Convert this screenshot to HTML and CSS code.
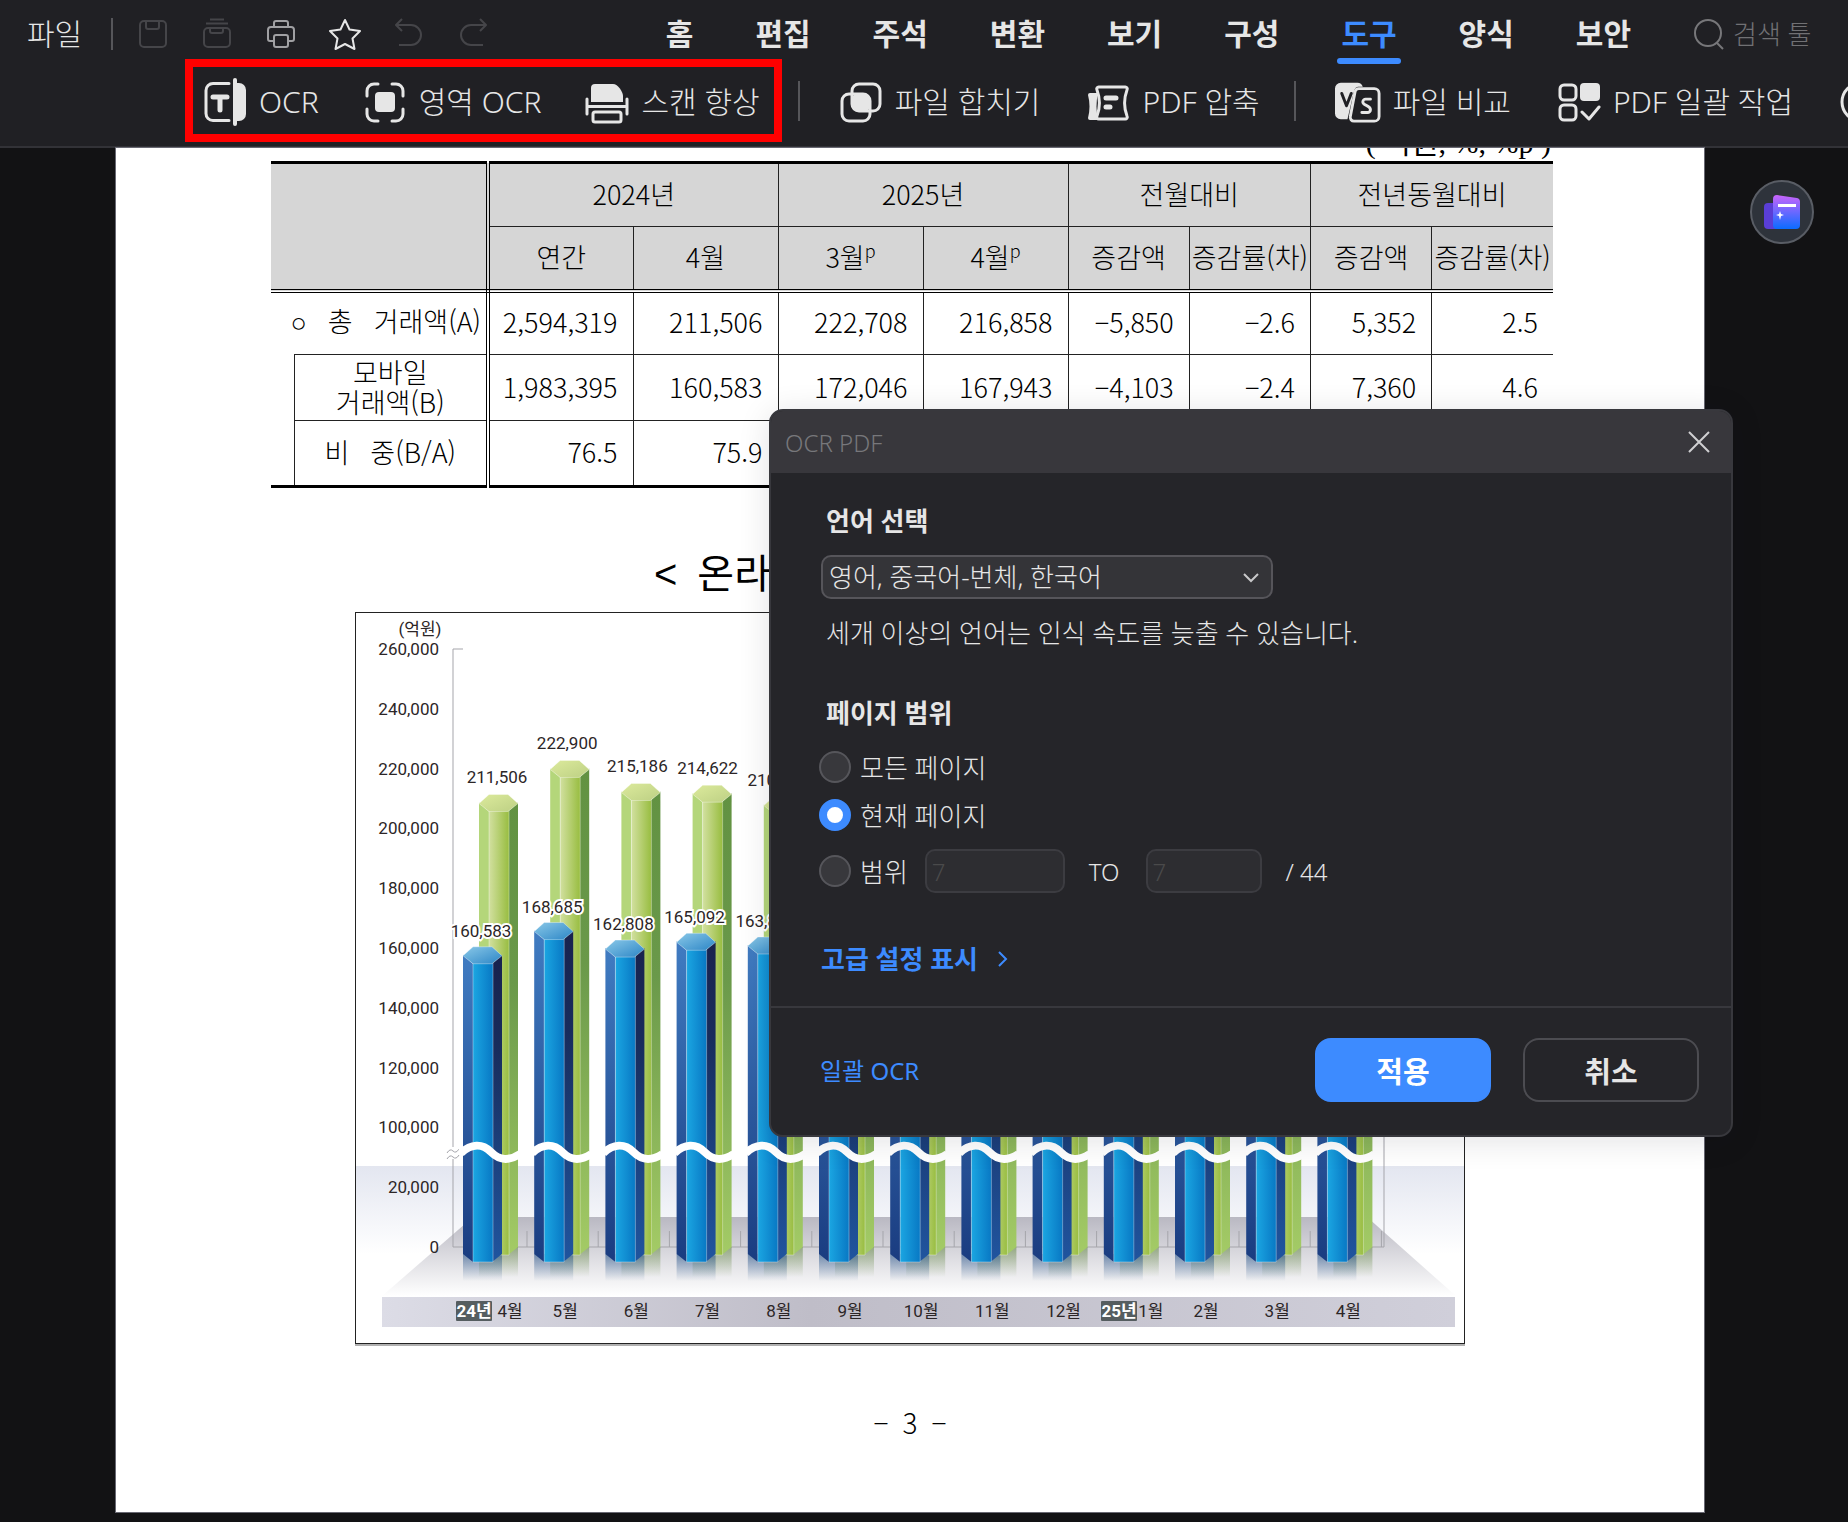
FILE: index.html
```html
<!DOCTYPE html>
<html lang="ko">
<head>
    <meta charset="UTF-8">
    <meta name="viewport" content="width=device-width, initial-scale=1.0">
    <title>OCR PDF</title>
    <link rel="stylesheet" href="styles.css">
</head>
<body>
    <header class="app-header">
        <!-- Menu row -->
        <div class="menu-row">
            <div class="quick-access">
                <button class="file-button">파일</button>
                <span class="divider small"></span>
                <button class="quick-button dim" aria-label="저장">
                    <svg width="32" height="32" viewBox="0 0 32 32"><rect x="3" y="3" width="26" height="26" rx="4"/><path d="M9 3v6a2 2 0 0 0 2 2h9a2 2 0 0 0 2-2V3"/></svg>
                </button>
                <button class="quick-button dim" aria-label="모두 저장">
                    <svg width="32" height="32" viewBox="0 0 32 32"><path d="M9 1.500h14M5 5.500h22"/><rect x="3" y="10" width="26" height="19" rx="4"/><path d="M9 10v3a2 2 0 0 0 2 2h9a2 2 0 0 0 2-2v-3"/></svg>
                </button>
                <button class="quick-button mid" aria-label="인쇄">
                    <svg width="32" height="32" viewBox="0 0 32 32"><path d="M9 9V5a2 2 0 0 1 2-2h10a2 2 0 0 1 2 2v4M8 23H5a2 2 0 0 1-2-2v-9a3 3 0 0 1 3-3h20a3 3 0 0 1 3 3v9a2 2 0 0 1-2 2h-3"/><rect x="9" y="17" width="14" height="12" rx="2"/></svg>
                </button>
                <button class="quick-button" aria-label="즐겨찾기">
                    <svg width="32" height="32" viewBox="0 0 32 32"><path d="M16 2l4.500 9.500 10.500 1.500-7.500 7.500 2 10.500-9.500-5-9.500 5 2-10.500L1 13l10.500-1.500z"/></svg>
                </button>
                <button class="quick-button dim" aria-label="실행 취소">
                    <svg width="32" height="32" viewBox="0 0 32 32"><path d="M9 1L3 7l6 6M3 7h15a10 10 0 0 1 0 20H6"/></svg>
                </button>
                <button class="quick-button dim" aria-label="다시 실행">
                    <svg width="32" height="32" viewBox="0 0 32 32"><path d="M23 1l6 6-6 6M29 7H14a10 10 0 0 0 0 20h12"/></svg>
                </button>
            </div>
            <nav class="tabs">
                <a href="#">홈</a>
                <a href="#">편집</a>
                <a href="#">주석</a>
                <a href="#">변환</a>
                <a href="#">보기</a>
                <a href="#">구성</a>
                <a href="#" class="active">도구</a>
                <a href="#">양식</a>
                <a href="#">보안</a>
                <label class="search">
                    <svg width="32" height="32" viewBox="0 0 32 32"><circle cx="15" cy="15" r="13"/><path d="M24 25l6 6"/></svg>
                    <input type="text" placeholder="검색 툴" aria-label="검색 툴">
                </label>
            </nav>
        </div>

        <!-- Tool row -->
        <div class="tool-row">
            <div class="tool-group highlight">
                <button class="tool">
                    <svg width="44" height="48" viewBox="0 0 44 48"><path class="line" d="M26 5.500H10a7 7 0 0 0-7 7v23a7 7 0 0 0 7 7h16"/><path d="M33 5h3a7 7 0 0 1 7 7v24a7 7 0 0 1-7 7h-3z"/><rect x="30" y="0" width="4" height="48" rx="2"/><path class="thick" d="M10 19h14M17 19v13"/></svg>
                    OCR
                </button>
                <button class="tool">
                    <svg width="44" height="48" viewBox="0 0 44 48"><path class="line" d="M4 18v-5a7 7 0 0 1 7-7h4M29 6h4a7 7 0 0 1 7 7v5M40 31v5a7 7 0 0 1-7 7h-4M15 43h-4a7 7 0 0 1-7-7v-5"/><rect x="12" y="14" width="20" height="20" rx="4"/></svg>
                    영역 OCR
                </button>
                <button class="tool">
                    <svg width="44" height="48" viewBox="0 0 44 48"><path d="M10 6h18c5 0 10 8 10 12v6H6V10a4 4 0 0 1 4-4z"/><path class="line" d="M2 21v15M42 21v15M2 28.500h40"/><rect class="line" x="8" y="34" width="28" height="10" rx="2"/></svg>
                    스캔 향상
                </button>
            </div>
            <span class="divider"></span>
            <div class="tool-group">
                <button class="tool">
                    <svg width="44" height="48" viewBox="0 0 44 48"><rect class="line" x="13" y="6" width="28" height="27" rx="7"/><rect class="line" x="3" y="16" width="28" height="27" rx="7"/><rect x="13" y="16" width="18" height="17" rx="5"/></svg>
                    파일 합치기
                </button>
                <button class="tool">
                    <svg width="44" height="48" viewBox="0 0 44 48"><path d="M4 15h8c-2 9-2 18 0 27H4a2 2 0 0 1-2-2c2-8 2-15 0-23a2 2 0 0 1 2-2z"/><path class="line" d="M13 9h26a2 2 0 0 1 2 3c-3 8-3 18 0 26a2 2 0 0 1-2 3H13a2 2 0 0 1-2-3c3-8 3-18 0-26a2 2 0 0 1 2-3z"/><path class="thick" d="M20 20h10M20 29h4"/></svg>
                    PDF 압축
                </button>
            </div>
            <span class="divider"></span>
            <div class="tool-group">
                <button class="tool">
                    <svg width="46" height="48" viewBox="0 0 48 48"><path d="M6 4h17a6 6 0 0 1 6 4h-5a5 5 0 0 0-4 4l-7 30H6a6 6 0 0 1-6-6V10a6 6 0 0 1 6-6z"/><path class="line panel" d="M25 10h16a5 5 0 0 1 5 5v24a5 5 0 0 1-5 5H20a4 4 0 0 1-4-5l5-26a4 4 0 0 1 4-3z"/><path class="line dark" d="M7 15l5 13 5-13"/><path class="line" d="M37 21h-5a3 3 0 0 0-3 3c0 4 8 3 8 8a3 3 0 0 1-3 3h-6"/></svg>
                    파일 비교
                </button>
                <button class="tool">
                    <svg width="44" height="48" viewBox="0 0 44 48"><rect class="line" x="3" y="7" width="16" height="15" rx="4"/><rect x="23" y="5" width="20" height="18" rx="4"/><rect class="line" x="3" y="27" width="16" height="15" rx="4"/><path class="line" d="M25 34l7 7 10-12"/></svg>
                    PDF 일괄 작업
                </button>
                <button class="tool" aria-label="더 보기">
                    <svg width="44" height="48" viewBox="0 0 44 48"><circle class="line" cx="22" cy="24" r="19"/></svg>
                </button>
            </div>
        </div>
    </header>

    <main class="workspace">
        <article class="page">
            <p class="unit">( 억원, %, %p )</p>
            <table class="stats">
                <colgroup>
                    <col class="indent"><col class="label">
                    <col class="wide"><col class="wide"><col class="wide"><col class="wide">
                    <col><col><col><col>
                </colgroup>
                <thead>
                    <tr>
                        <th colspan="2" rowspan="2" class="head-label"></th>
                        <th colspan="2">2024년</th>
                        <th colspan="2">2025년</th>
                        <th colspan="2">전월대비</th>
                        <th colspan="2">전년동월대비</th>
                    </tr>
                    <tr>
                        <th>연간</th>
                        <th>4월</th>
                        <th>3월<sup>p</sup></th>
                        <th>4월<sup>p</sup></th>
                        <th>증감액</th>
                        <th>증감률(차)</th>
                        <th>증감액</th>
                        <th>증감률(차)</th>
                    </tr>
                </thead>
                <tbody>
                    <tr>
                        <th colspan="2" class="total"><span class="bullet">○</span>&ensp;&nbsp;총&ensp;&nbsp;거래액(A)</th>
                        <td>2,594,319</td><td>211,506</td><td>222,708</td><td>216,858</td>
                        <td>−5,850</td><td>−2.6</td><td>5,352</td><td>2.5</td>
                    </tr>
                    <tr>
                        <td rowspan="2" class="blank"></td>
                        <th>모바일<br>거래액(B)</th>
                        <td>1,983,395</td><td>160,583</td><td>172,046</td><td>167,943</td>
                        <td>−4,103</td><td>−2.4</td><td>7,360</td><td>4.6</td>
                    </tr>
                    <tr>
                        <th>비&ensp;&nbsp;중(B/A)</th>
                        <td>76.5</td><td>75.9</td><td></td><td></td>
                        <td></td><td></td><td></td><td></td>
                    </tr>
                </tbody>
            </table>

            <h2 class="chart-title">&lt;&ensp;온라</h2>
            <div class="chart-frame">
                <svg id="chart" class="chart" viewBox="0 0 1108 730" role="img" aria-label="월별 거래액">
                    <defs>
                        <linearGradient id="sky" x2="0" y2="1"><stop offset="0" stop-color="#e3e6f0"/><stop offset="1" stop-color="#fff"/></linearGradient>
                        <linearGradient id="floor" x2="0" y2="1"><stop offset="0" stop-color="#b9b8c2"/><stop offset="1" stop-color="#fff"/></linearGradient>
                        <linearGradient id="strip"><stop offset="0" stop-color="#dcdce6"/><stop offset=".4" stop-color="#bfbdc8"/><stop offset="1" stop-color="#d0cfda"/></linearGradient>
                        <linearGradient id="blueFront"><stop offset="0" stop-color="#1ba6e2"/><stop offset="1" stop-color="#0878c4"/></linearGradient>
                        <linearGradient id="blueLeft" x2="0" y2="1"><stop offset="0" stop-color="#407cc2"/><stop offset="1" stop-color="#1a3c80"/></linearGradient>
                        <linearGradient id="blueRight" x2="0" y2="1"><stop offset="0" stop-color="#18224e"/><stop offset=".3" stop-color="#182c5c"/><stop offset="1" stop-color="#20559f"/></linearGradient>
                        <linearGradient id="blueTop" x2="1" y2="1"><stop offset="0" stop-color="#8ac8e8"/><stop offset="1" stop-color="#2c86c6"/></linearGradient>
                        <linearGradient id="greenFront"><stop offset="0" stop-color="#d2e0a0"/><stop offset="1" stop-color="#98bd40"/></linearGradient>
                        <linearGradient id="greenRight" x2="0" y2="1"><stop offset="0" stop-color="#629242"/><stop offset=".4" stop-color="#6a994a"/><stop offset="1" stop-color="#a4cb66"/></linearGradient>
                        <linearGradient id="greenTop" x2="1" y2="1"><stop offset="0" stop-color="#dcea9c"/><stop offset="1" stop-color="#bdd084"/></linearGradient>
                        <linearGradient id="blueMirror" x2="0" y2="1"><stop offset="0" stop-color="#2a568c" stop-opacity=".6"/><stop offset="1" stop-color="#2a568c" stop-opacity="0"/></linearGradient>
                        <linearGradient id="greenMirror" x2="0" y2="1"><stop offset="0" stop-color="#6a8c4a" stop-opacity=".6"/><stop offset="1" stop-color="#6a8c4a" stop-opacity="0"/></linearGradient>
                    </defs>
                    <rect y="553" width="1108" height="88" fill="url(#sky)"/>
                    <path d="M117 604H1011L1100 683H26z" fill="url(#floor)"/>
                    <rect x="26" y="684" width="1073" height="30" fill="url(#strip)"/>
                    <path class="axis" d="M107 36H97V534M97 546V634H1028V36"/>
                    <path class="axis" d="M91 540q3-5 6-2t6-2M91 546q3-5 6-2t6-2"/>
                </svg>
            </div>
            <p class="page-number">−&ensp;3&ensp;−</p>
        </article>

        <button class="assistant" aria-label="AI">
            <svg width="40" height="40" viewBox="0 0 40 40">
                <defs><linearGradient id="card" x2="0" y2="1"><stop offset="0" stop-color="#c964fb"/><stop offset=".5" stop-color="#6a68ff"/><stop offset="1" stop-color="#0a6cff"/></linearGradient></defs>
                <rect x="2" y="11" width="20" height="26" rx="4" fill="#5a3ed6"/>
                <path d="M15 3l20 3a4 4 0 0 1 3 4v23a4 4 0 0 1-4 4H15a4 4 0 0 1-4-4V7a4 4 0 0 1 4-4z" fill="url(#card)"/>
                <path d="M16 12h18v3H16zM18 19l1 3 3 1-3 1-1 4-1-4-3-1 3-1z" fill="#fff"/>
            </svg>
        </button>

        <!-- OCR dialog -->
        <form class="dialog" role="dialog" aria-labelledby="dialogTitle">
            <div class="dialog-header">
                <span id="dialogTitle">OCR PDF</span>
                <button type="button" class="close" aria-label="닫기">
                    <svg width="24" height="24" viewBox="0 0 24 24"><path d="M2 2l20 20M22 2L2 22"/></svg>
                </button>
            </div>
            <div class="dialog-body">
                <label class="section-title" for="language">언어 선택</label>
                <div class="select-box">
                    <select id="language">
                        <option>영어, 중국어-번체, 한국어</option>
                    </select>
                    <svg width="16" height="10" viewBox="0 0 16 10"><path d="M1 1l7 7 7-7"/></svg>
                </div>
                <p class="hint">세개 이상의 언어는 인식 속도를 늦출 수 있습니다.</p>

                <p class="section-title range-title">페이지 범위</p>
                <label class="option"><input type="radio" name="range">모든 페이지</label>
                <label class="option"><input type="radio" name="range" checked>현재 페이지</label>
                <div class="range-row">
                    <label class="option"><input type="radio" name="range">범위</label>
                    <input type="text" class="from" value="7" aria-label="시작 페이지" disabled>
                    <span>TO</span>
                    <input type="text" class="to" value="7" aria-label="끝 페이지" disabled>
                    <span>/ 44</span>
                </div>
                <a href="#" class="advanced">고급 설정 표시
                    <svg width="10" height="16" viewBox="0 0 10 16"><path d="M1 1l7 7-7 7"/></svg>
                </a>
            </div>
            <div class="dialog-footer">
                <a href="#">일괄 OCR</a>
                <button type="button" class="primary">적용</button>
                <button type="button">취소</button>
            </div>
        </form>
    </main>

    <script src="chart.js"></script>
</body>
</html>
```
FILE: styles.css
```css
* {
    box-sizing: border-box;
}

body {
    margin: 0;
    background: #121214;
    color: #e6e6e6;
    font-family: "Noto Sans", "Noto Sans CJK KR", sans-serif;
    font-size: 26px;
    font-weight: 300;
    overflow-x: hidden;
}

button {
    padding: 0;
    border: none;
    background: none;
    color: inherit;
    font: inherit;
    cursor: pointer;
}

a {
    color: inherit;
    text-decoration: none;
}

svg {
    display: block;
    flex: none;
    fill: none;
}

/* Header */
.app-header {
    height: 148px;
    background: #202024;
    border-bottom: 2px solid #323237;
    overflow: hidden;
}

.menu-row {
    display: flex;
    justify-content: space-between;
    height: 59px;
    padding: 8px 31px 0 27px;
}

.quick-access,
.tabs {
    display: flex;
    align-items: center;
    line-height: 50px;
}

.quick-access {
    gap: 32px;
    font-size: 30px;
}

.quick-button svg {
    stroke: #e6e6e6;
    stroke-width: 2;
    stroke-linejoin: round;
}

.quick-button.dim svg {
    stroke: #454549;
}

.quick-button.mid svg {
    stroke: #a0a0a3;
}

.file-button {
    margin-right: -3px;
}

.divider {
    flex: none;
    width: 2px;
    height: 40px;
    background: #56565a;
}

.divider.small {
    height: 32px;
    margin-right: -8px;
}

.tabs {
    gap: 62px;
    font-size: 30px;
    font-weight: 700;
}

.tabs a {
    position: relative;
}

.tabs .active {
    color: #3d8bff;
}

.tabs .active::after {
    content: "";
    position: absolute;
    left: -4px;
    right: -4px;
    bottom: -5px;
    height: 6px;
    border-radius: 3px;
    background: #3d8bff;
}

.search {
    display: flex;
    align-items: center;
    gap: 8px;
}

.search svg {
    stroke: #77777a;
    stroke-width: 2;
}

.search input {
    width: 84px;
    padding: 0;
    border: none;
    background: none;
    font: 300 26px "Noto Sans", "Noto Sans CJK KR", sans-serif;
}

.search input::placeholder {
    color: #717174;
}

.tool-row {
    display: flex;
    align-items: center;
    height: 83px;
    padding-left: 185px;
    white-space: nowrap;
}

.tool-group {
    display: flex;
    flex: none;
    align-items: center;
    gap: 46px;
    height: 83px;
    padding: 3px 34px 0 39px;
}

.tool-group.highlight {
    gap: 44px;
    margin-right: 16px;
    padding: 3px 14px 0 10px;
    border: 8px solid #ff0000;
}

.tool {
    display: flex;
    align-items: center;
    gap: 12px;
    font-size: 30px;
    line-height: 48px;
}

.tool svg {
    fill: #e6e6e6;
}

.tool .line,
.tool .thick {
    fill: none;
    stroke: #e6e6e6;
    stroke-width: 3;
    stroke-linecap: round;
    stroke-linejoin: round;
}

.tool .thick {
    stroke-width: 5;
}

.tool .dark {
    stroke: #202024;
}

.tool .panel {
    fill: #202024;
}

/* Document */
.workspace {
    position: relative;
    padding: 0 144px 8px 116px;
}

.page {
    padding: 0 0 70px;
    overflow: hidden;
    background: #fff;
    outline: 1px solid #686872;
    color: #000;
    font-family: "Noto Sans CJK KR", sans-serif;
}

.unit {
    margin: -24px 153px 0 0;
    font: 30px/37px "Liberation Serif", "Noto Sans CJK KR", serif;
    text-align: right;
}

.stats {
    width: calc(100% - 306px);
    margin-left: 155px;
    border-collapse: collapse;
    border-top: 3px solid #000;
    border-bottom: 3px solid #000;
    table-layout: fixed;
    font-size: 27px;
    line-height: 30px;
    white-space: nowrap;
}

.stats .indent {
    width: 23px;
}

.stats .label {
    width: 194px;
}

.stats .wide {
    width: 145px;
}

.stats th,
.stats td {
    height: 64px;
    padding: 0 0 2px;
    border: 1px solid #222;
    font-weight: 300;
}

.stats tbody tr + tr > * {
    height: 66px;
}

.stats td {
    padding-right: 15px;
    text-align: right;
}

.stats thead th {
    background: #d6d6d6;
}

.stats thead tr:last-child th,
.stats thead .head-label {
    border-bottom: 4px double #000;
}

.stats tr > :first-child {
    border-left: none;
}

.stats tr > :last-child {
    border-right: none;
}

.stats thead .head-label,
.stats tbody th {
    border-right: 4px double #000;
}

.stats thead tr:last-child th:first-child {
    border-left: 4px double #000;
}

.stats .total {
    padding-right: 5px;
    border-bottom: none;
    text-align: right;
}

.stats .bullet {
    font-family: "Liberation Sans", sans-serif;
}

.stats tbody tr:nth-child(2) th {
    border-top: 1px solid #222;
}

.stats tbody tr:last-child th {
    border-left: 1px solid #222;
}

.stats .blank {
    border-top: none;
}

.stats sup {
    font-size: 18px;
    line-height: 0;
}

.chart-title {
    margin: 56px 0 8px;
    padding-left: 538px;
    color: #000;
    font: 400 40px/60px "Liberation Sans", "Noto Sans CJK KR", serif;
}

.chart-frame {
    margin: 0 239px;
    border: 1px solid #222;
    box-shadow: 0 2px 0 #b0b0b0;
}

.chart {
    width: 100%;
    height: auto;
    font-family: Roboto, "Noto Sans CJK KR", sans-serif;
    font-size: 17px;
    font-weight: 400;
}

.chart text {
    fill: #2c2627;
    dominant-baseline: central;
    text-anchor: middle;
}

.chart .tick {
    text-anchor: end;
}

.chart .value {
    paint-order: stroke;
    stroke: #fff;
    stroke-width: 4px;
}

.chart .year-box {
    fill: #555d60;
}

.chart .year {
    fill: #fff;
    font-weight: 700;
}

.axis {
    stroke: #a5a5ab;
}

.wave {
    stroke: #fff;
    stroke-width: 8;
}

.edge {
    stroke: #fff;
    stroke-opacity: .35;
}

.page-number {
    margin: 58px 0 0;
    font-size: 28px;
    line-height: 40px;
    text-align: center;
}

.assistant {
    display: flex;
    position: absolute;
    top: 32px;
    right: 34px;
    align-items: center;
    justify-content: center;
    width: 64px;
    height: 64px;
    border: 2px solid #595d65;
    border-radius: 50%;
    background: #2e333b;
}

/* Dialog */
.dialog {
    position: absolute;
    top: 261px;
    right: 115px;
    width: 964px;
    border: 2px solid #38383d;
    border-radius: 14px;
    background: #252529;
    box-shadow: 0 4px 32px rgba(0, 0, 30, .12);
    overflow: hidden;
}

.dialog-header {
    display: flex;
    align-items: center;
    justify-content: space-between;
    height: 62px;
    padding: 0 20px 0 14px;
    background: #38373c;
    color: #77777b;
    font-size: 24px;
}

.close svg {
    stroke: #d0d0d2;
    stroke-width: 2;
}

.dialog-body {
    height: 533px;
    padding: 30px 50px 0;
}

.section-title {
    display: block;
    margin: 0 0 16px 5px;
    font-weight: 700;
    line-height: 36px;
}

.select-box {
    position: relative;
    width: 452px;
}

.select-box select {
    display: block;
    width: 100%;
    height: 44px;
    padding: 0 6px;
    border: 2px solid #56555a;
    border-radius: 10px;
    appearance: none;
    background: #343438;
    color: inherit;
    font: inherit;
    line-height: 36px;
}

.select-box svg {
    position: absolute;
    top: 18px;
    right: 14px;
    stroke: #c8c8ca;
    stroke-width: 2;
}

.hint {
    margin: 16px 0 0 5px;
    line-height: 36px;
}

.range-title {
    margin-top: 44px;
}

.option {
    display: flex;
    align-items: center;
    gap: 9px;
    height: 48px;
    margin-left: -2px;
}

.range-title + .option {
    margin-top: -4px;
}

.option input {
    width: 32px;
    height: 32px;
    margin: 0;
    border: 2px solid #56565b;
    border-radius: 50%;
    appearance: none;
    background: #38383c;
}

.option input:checked {
    border: 8px solid #3d8bff;
    background: #fff;
}

.range-row {
    display: flex;
    align-items: center;
    height: 64px;
    font-size: 24px;
}

.range-row .option {
    font-size: 26px;
}

.range-row > input {
    height: 44px;
    padding: 0 5px;
    border: 2px solid #3c3c41;
    border-radius: 10px;
    background: #2d2d31;
    color: #4a4a4b;
    font: inherit;
}

.from {
    width: 140px;
    margin: 0 24px 0 17px;
}

.to {
    width: 116px;
    margin: 0 24px 0 26px;
}

.advanced {
    display: flex;
    align-items: center;
    gap: 20px;
    margin-top: 38px;
    color: #3d8bff;
    font-weight: 700;
    line-height: 36px;
}

.advanced svg {
    stroke: #3d8bff;
    stroke-width: 2;
}

.dialog-footer {
    display: flex;
    align-items: center;
    gap: 32px;
    height: 129px;
    padding: 0 32px 4px 49px;
    border-top: 2px solid #38383d;
}

.dialog-footer a {
    margin-right: auto;
    color: #3d8bff;
    font-size: 24px;
    font-weight: 400;
}

.dialog-footer button {
    width: 176px;
    height: 64px;
    border: 2px solid #4c4c51;
    border-radius: 16px;
    font-size: 29px;
    font-weight: 700;
}

.dialog-footer .primary {
    border-color: #3d8bff;
    background: #3d8bff;
    color: #fff;
}
```
FILE: chart.js
```js
var chart = document.getElementById('chart');

// month, total, mobile
var data = [
    ['4월', 211506, 160583],
    ['5월', 222900, 168685],
    ['6월', 215186, 162808],
    ['7월', 214622, 165092],
    ['8월', 210800, 163850],
    ['9월', 208000, 160100],
    ['10월', 219000, 164200],
    ['11월', 221000, 166000],
    ['12월', 220500, 165900],
    ['1월', 212000, 163000],
    ['2월', 204000, 158000],
    ['3월', 222708, 172046],
    ['4월', 216858, 167943]
];
var step = 71.2;
var labelled = 5; // the rest sit under the dialog

function y(value) {
    return 335.5 - (value - 160000) / 20000 * 59.8;
}

function add(name, attrs, text) {
    var el = document.createElementNS('http://www.w3.org/2000/svg', name);
    for (var key in attrs) {
        el.setAttribute(key, attrs[key]);
    }
    if (text) {
        el.textContent = text;
    }
    chart.appendChild(el);
}

// Hexagonal column: left face, front face, right face, top
function column(x, top, bottom, left, front, right, cap) {
    add('path', { d: 'M' + x + ' ' + (top + 8) + 'l10 9V' + bottom + 'l-10-8z', fill: left });
    add('path', { d: 'M' + (x + 39) + ' ' + (top + 8) + 'l-10 9V' + bottom + 'l10-8z', fill: right });
    add('path', { d: 'M' + (x + 10) + ' ' + (top + 16) + 'h20V' + bottom + 'h-20z', fill: front, class: 'edge' });
    add('path', { d: 'M' + x + ' ' + (top + 9) + 'l10-9h19l10 9-10 8h-19z', fill: cap, class: 'edge' });
}

// Axis labels
add('text', { x: 64, y: 16 }, '(억원)');
[260, 240, 220, 200, 180, 160, 140, 120, 100, 20, 0].forEach(function(value, i) {
    add('text', { x: 83, y: 36 + i * 59.8, class: 'tick' }, value ? value + ',000' : '0');
});

data.forEach(function(row, i) {
    var x = 107 + i * step;
    add('path', { d: 'M' + (x + 64) + ' 618v16', class: 'axis' });
    add('rect', { x: x + 16, y: 634, width: 39, height: 30, fill: 'url(#greenMirror)' });
    add('rect', { x: x, y: 641, width: 39, height: 27, fill: 'url(#blueMirror)' });
    column(x + 16, y(row[1]), 642, '#b4d67a', 'url(#greenFront)', 'url(#greenRight)', 'url(#greenTop)');
    column(x, y(row[2]), 649, 'url(#blueLeft)', 'url(#blueFront)', 'url(#blueRight)', 'url(#blueTop)');
    add('path', {
        d: 'M' + (x - 2) + ' 540C' + (x + 8) + ' 531 ' + (x + 19) + ' 530 ' + (x + 28) + ' 539S' + (x + 46) + ' 548 ' + (x + 57) + ' 541',
        class: 'wave'
    });
});

data.forEach(function(row, i) {
    var x = 107 + i * step;
    if (i < labelled) {
        add('text', { x: x + 34 - i, y: y(row[1]) - 17, class: 'value' }, row[1].toLocaleString('en-US'));
        add('text', { x: x + 18, y: y(row[2]) - 16, class: 'value' }, row[2].toLocaleString('en-US'));
    }
    add('text', { x: i % 9 ? x + 31 : x + 47, y: 698 }, row[0]);
});

[[100, '24년'], [745, '25년']].forEach(function(badge) {
    add('rect', { x: badge[0], y: 688, width: 36, height: 20, rx: 1, class: 'year-box' });
    add('text', { x: badge[0] + 18, y: 698, class: 'year' }, badge[1]);
});
```
